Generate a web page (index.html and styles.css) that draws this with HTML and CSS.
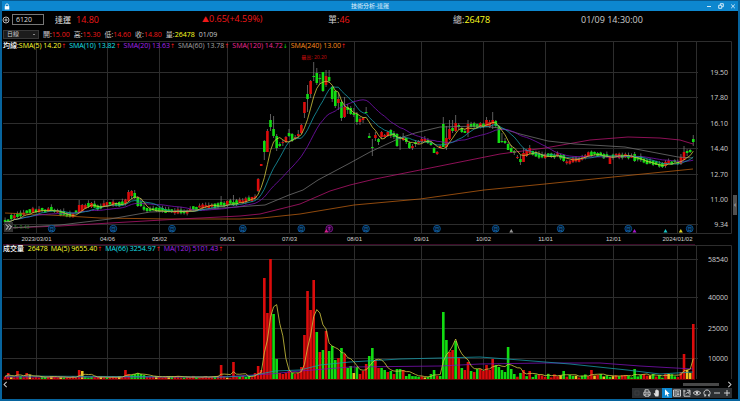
FILE: index.html
```html
<!DOCTYPE html>
<html lang="zh-TW">
  <head>
    <meta charset="UTF-8" />
    <meta name="viewport" content="width=device-width, initial-scale=1.0" />
    <title>技術分析-達運</title>
    <link rel="stylesheet" href="styles.css">
  </head>
  <body>
    <div class="window">
      <header class="titlebar">
        <svg class="titlebar__lock" viewBox="0 0 8 8" aria-hidden="true">
          <path d="M2 4V2.5a2 2 0 0 1 4 0V4" fill="none" stroke="#fff" />
          <rect x="1" y="3.5" width="6" height="4.5" fill="#fff" />
        </svg>
        <h1 class="titlebar__title">技術分析-達運</h1>
        <div class="titlebar__controls">
          <button class="titlebar__btn" aria-label="最小化">
            <svg viewBox="0 0 6 6"><path d="M1 3.5h4" /></svg>
          </button>
          <button class="titlebar__btn" aria-label="還原">
            <svg viewBox="0 0 6 6"><path d="M.7 2.3h3v3h-3zM2.3 2V.7h3v3H4" /></svg>
          </button>
          <button class="titlebar__btn" aria-label="關閉">
            <svg viewBox="0 0 6 6"><path d="M1.2 1.5l3.6 3.6M4.8 1.5L1.2 5.1" /></svg>
          </button>
        </div>
      </header>

      <!-- Quote -->
      <section class="quote">
        <div class="quote__stock">
          <button class="quote__add" aria-label="加入">
            <svg viewBox="0 0 8 8"><circle cx="4" cy="4" r="3" /><path d="M4 2.4v3.2M2.4 4h3.2" /></svg>
          </button>
          <input class="quote__code" type="text" value="6120" aria-label="股票代號" />
          <span class="quote__name">達運</span>
          <span class="quote__price up">14.80</span>
        </div>
        <span class="up"><span class="quote__mark">▲</span>0.65(+4.59%)</span>
        <span>單:<span class="up">46</span></span>
        <span>總:<span class="volume">26478</span></span>
        <time>01/09 14:30:00</time>
      </section>

      <!-- Period + OHLC -->
      <section class="ohlc">
        <select class="ohlc__period" aria-label="週期">
          <option>日線</option>
        </select>
        <span>開:<span class="up">15.00</span></span>
        <span>高:<span class="up">15.30</span></span>
        <span>低:<span class="up">14.60</span></span>
        <span>收:<span class="up">14.80</span></span>
        <span>量:<span class="volume">26478</span></span>
        <time>01/09</time>
      </section>

      <main class="charts">
        <section class="panel">
          <svg class="panel__plot" id="price" viewBox="2 41 736 203" role="img" aria-label="日線"></svg>
          <div class="legend">
            <span class="legend__item legend__item--sma5"><b>均線:</b>SMA(5) 14.20<i class="up">↑</i></span>
            <span class="legend__item legend__item--sma10">SMA(10) 13.82<i class="up">↑</i></span>
            <span class="legend__item legend__item--sma20">SMA(20) 13.63<i class="up">↑</i></span>
            <span class="legend__item legend__item--sma60">SMA(60) 13.78<i class="up">↑</i></span>
            <span class="legend__item legend__item--sma120">SMA(120) 14.72<i class="down">↓</i></span>
            <span class="legend__item legend__item--sma240">SMA(240) 13.00<i class="up">↑</i></span>
          </div>
          <button class="panel__expand" aria-label="展開">
            <svg viewBox="0 0 9 9"><path d="M1.8 1.8l2.7 2.7-2.7 2.7M4.8 1.8l2.7 2.7-2.7 2.7" /></svg>
          </button>
          <button class="panel__handle" aria-label="側欄">‹</button>
        </section>

        <section class="panel">
          <svg class="panel__plot" id="volume" viewBox="2 244 736 136" role="img" aria-label="成交量"></svg>
          <div class="legend">
            <span class="legend__item legend__item--sma5"><b>成交量</b> &nbsp;26478</span>
            <span class="legend__item legend__item--sma5">MA(5) 9655.40<i class="up">↑</i></span>
            <span class="legend__item legend__item--sma10">MA(66) 3254.97<i class="up">↑</i></span>
            <span class="legend__item legend__item--sma20">MA(120) 5101.43<i class="up">↑</i></span>
          </div>
        </section>
      </main>

      <div class="scroll">
        <button class="scroll__arrow" aria-label="向左"><svg viewBox="0 0 6 6"><path d="M4 .8L1.8 3 4 5.2" /></svg></button>
        <input class="scroll__range" type="range" min="0" max="100" value="100" aria-label="捲動" />
        <button class="scroll__arrow" aria-label="向右"><svg viewBox="0 0 6 6"><path d="M2 .8L4.2 3 2 5.2" /></svg></button>
      </div>

      <footer class="tools">
        <button class="tools__btn tools__btn--off" aria-label="儲存"><svg viewBox="0 0 10 10"><path d="M3 3h4v4H3z" /></svg></button>
        <button class="tools__btn" aria-label="列印"><svg viewBox="0 0 10 10"><path d="M3 4V1.8h3.2L7 2.6V4M2.8 7.3H1.9V4.2h6.2v3.1H7.2M3 6h4v2.2H3z" /></svg></button>
        <button class="tools__btn" aria-label="拖曳"><svg viewBox="0 0 10 10"><path class="fill" d="M3.4 8.5L1.8 5.8c-.3-.7.5-1 .9-.5l.5.6V2.6c0-.6.8-.6.9 0V1.9c0-.6.9-.6.9 0v.3c0-.6.9-.6.9 0v.6c0-.5.9-.5.9 0v3.6L6.4 8.5z" /></svg></button>
        <button class="tools__btn tools__btn--active" aria-label="選取"><svg viewBox="0 0 10 10"><path class="fill" d="M3 1.2v6.6l1.6-1.5 1.1 2.4 1-.5-1-2.3h2z" /></svg></button>
        <button class="tools__btn" aria-label="資訊"><svg viewBox="0 0 10 10"><path d="M1.5 2h7v6.2h-7zM4 2v6.2M2.2 4h1M2.2 6h1M5 3.8h2.4M5 5.2h2.4M5 6.6h2.4" /></svg></button>
        <button class="tools__btn" aria-label="指標"><svg viewBox="0 0 10 10"><path d="M2 1.8v6.4h6.3M1.5 3h2.2M3.4 6.4l1.8-2 1.2 1 1-2.6M5 2.2h3v5" /></svg></button>
        <button class="tools__btn" aria-label="顯示"><svg viewBox="0 0 10 10"><path d="M1.2 5Q5 1 8.8 5 5 9 1.2 5z" /><circle class="fill" cx="5" cy="4.8" r="1.3" /></svg></button>
        <button class="tools__btn" aria-label="重新整理"><svg viewBox="0 0 10 10"><path d="M3.4 7.7A3.1 3.1 0 1 1 6.6 7.7M2 7.9h1.7V6.3M8 7.9H6.5V6.3" /></svg></button>
        <button class="tools__btn" aria-label="縮小"><svg viewBox="0 0 10 10"><path d="M2 5h6" /></svg></button>
        <button class="tools__btn" aria-label="放大"><svg viewBox="0 0 10 10"><path d="M2 5h6M5 2v6" /></svg></button>
      </footer>
    </div>
    <script src="chart.js"></script>
  </body>
</html>
```
FILE: styles.css
```css
* {
  box-sizing: border-box;
}

body {
  margin: 0;
  background-color: #000;
  color: #ccc;
  font-family: "Open Sans", "Noto Sans", "Noto Sans CJK TC", sans-serif;
  font-size: 7px;
}

button,
input,
select {
  margin: 0;
  padding: 0;
  border: none;
  background: none;
  color: inherit;
  font: inherit;
}

button svg {
  display: block;
  width: 100%;
  height: 100%;
  fill: none;
  stroke: currentColor;
  stroke-width: 0.9;
}

.window {
  display: flex;
  flex-direction: column;
  min-height: 100vh;
  border: 2px solid #07649d;
  border-top: none;
}

.up {
  color: #f01818;
}

.down {
  color: #16d816;
}

.volume {
  color: #ffff20;
}

/* Title bar */
.titlebar {
  display: grid;
  grid-template-columns: 1fr auto 1fr;
  align-items: center;
  height: 11px;
  padding: 0 2px;
  border-top: 1px solid #07598f;
  background-color: #0d87cf;
  color: #e4f3fc;
}

.titlebar__lock {
  width: 6px;
  height: 7px;
}

.titlebar__title {
  margin: 0;
  font-size: 6px;
  font-weight: normal;
  line-height: 10px;
}

.titlebar__controls {
  display: flex;
  justify-content: flex-end;
  gap: 6px;
}

.titlebar__btn {
  width: 6px;
  height: 6px;
}

/* Quote row */
.quote {
  display: grid;
  grid-template-columns: 200fr 126fr 125fr 128fr 157fr;
  align-items: center;
  height: 17px;
  font-size: 9px;
  line-height: 12px;
  white-space: nowrap;
}

.quote__stock {
  display: flex;
  align-items: center;
}

.quote__add {
  width: 8px;
  height: 8px;
  margin-right: 2px;
}

.quote__code {
  width: 32px;
  height: 11px;
  padding: 0 3px;
  border: 1px solid #777;
  color: #ddd;
  font-size: 7px;
}

.quote__name {
  margin: 0 5px 0 11px;
  font-size: 8px;
  font-weight: 500;
}

.quote__mark {
  font-size: 7px;
}

/* OHLC row */
.ohlc {
  display: flex;
  align-items: center;
  gap: 4px;
  height: 13px;
  line-height: 9px;
}

.ohlc__period {
  appearance: none;
  width: 36px;
  height: 9px;
  margin-left: 1px;
  padding: 0 3px;
  border: 1px solid #383838;
  background: linear-gradient(#888, #888) right 3px center / 2px 1px no-repeat #1c1c1c;
  color: #ccc;
  font-size: 6px;
  line-height: 7px;
}

/* Chart panels */
.panel {
  position: relative;
}

.panel__plot {
  display: block;
  width: 100%;
  height: auto;
}

.panel__expand {
  position: absolute;
  bottom: 12px;
  left: 2px;
  width: 9px;
  height: 10px;
  background-color: #333;
  color: #fff;
}

.panel__handle {
  position: absolute;
  top: 154px;
  right: 1px;
  width: 4px;
  height: 20px;
  background-color: #505050;
  color: #ddd;
  line-height: 18px;
}

.legend {
  position: absolute;
  top: 0;
  left: 1px;
  display: flex;
  gap: 3px;
  line-height: 9px;
  white-space: nowrap;
}

.legend__item b {
  color: #fff;
  font-weight: 500;
}

.legend__item i {
  display: inline-block;
  width: 5px;
  font-family: "DejaVu Sans", sans-serif;
  font-size: 6px;
  font-style: normal;
  text-align: center;
}

.legend__item--sma5 {
  color: #ffff30;
}

.legend__item--sma10 {
  color: #18e0ec;
}

.legend__item--sma20 {
  color: #a424ec;
}

.legend__item--sma60 {
  color: #a4a4a4;
}

.legend__item--sma120 {
  color: #ec2894;
}

.legend__item--sma240 {
  color: #fc8c1c;
}

/* Svg parts */
.grid {
  stroke: #2d2d2d;
  fill: none;
}

.split {
  stroke: #3c0a28;
}

.line {
  fill: none;
  stroke-width: 0.8;
}

.line--sma5 {
  stroke: #d2c840;
}

.line--sma10 {
  stroke: #1899a8;
}

.line--sma20 {
  stroke: #7a12b4;
}

.line--sma60 {
  stroke: #707070;
}

.line--sma120 {
  stroke: #b0146c;
}

.line--sma240 {
  stroke: #b45c10;
}

.wick {
  stroke: #858585;
  stroke-width: 0.7;
}

.bar--r {
  fill: #dc0c0c;
}

.bar--g {
  fill: #12dc12;
}

.bar--y {
  fill: #f0c020;
}

.label {
  fill: #d0d0d0;
  font-size: 7px;
}

.label--date {
  font-family: "Liberation Sans", sans-serif;
  font-size: 6px;
}

.label--high {
  fill: #c80c0c;
  font-size: 5px;
}

.label--low {
  fill: #3c8c3c;
  font-size: 5px;
}

.month {
  fill: #04182c;
  stroke: #0b5ea4;
  stroke-width: 0.8;
}

.month__text {
  fill: #1672bc;
  font-size: 5px;
}

.month--quarter {
  fill: #200428;
  stroke: #8c149c;
}

/* Scroll bar */
.scroll {
  display: flex;
  align-items: center;
  height: 8px;
  padding-right: 5px;
}

.scroll__arrow {
  width: 7px;
  height: 7px;
}

.scroll__range {
  appearance: none;
  flex: 1;
  min-width: 0;
  height: 4px;
  margin: 0 7px 0 0;
}

.scroll__range::-webkit-slider-thumb {
  appearance: none;
  width: 36px;
  height: 3px;
  background-color: #484848;
}

/* Tools */
.tools {
  display: flex;
  justify-content: flex-end;
  height: 11px;
  padding: 0 6px 1px 0;
}

.tools__btn {
  width: 10px;
  height: 10px;
  background-color: #2c2f32;
  color: #ddd;
}

.tools__btn .fill {
  fill: currentColor;
  stroke: none;
}

.tools__btn--off {
  color: #3c3f42;
}

.tools__btn--active {
  background-color: #0d87cf;
  color: #fff;
}
```
FILE: chart.js
```js
const NS = "http://www.w3.org/2000/svg";
const COUNT = 224;
const FIRST_X = 5.1;
const STEP = 3.086;
const BASE = 379;

const price = document.getElementById("price");
const volume = document.getElementById("volume");

const months = [
  [36.5, "2023/03/01"], [107.5, "04/06"], [159.5, "05/02"], [227.5, "06/01"], [289.5, "07/03"], [354.5, "08/01"],
  [421.5, "09/01"], [483.5, "10/02"], [545.5, "11/01"], [613.5, "12/01"], [677.5, "2024/01/02"],
];
const priceLabels = [[72.5, "19.50"], [97.5, "17.80"], [123.5, "16.10"], [148.5, "14.40"], [174.5, "12.70"], [199.5, "11.00"], [224.5, "9.34"]];
const volumeLabels = [[259.5, "58540"], [297.5, "40000"], [328.5, "25000"], [358.5, "10000"]];

function add(parent, tag, attrs, text) {
  const el = document.createElementNS(NS, tag);
  for (const key in attrs) el.setAttribute(key, attrs[key]);
  if (text) el.textContent = text;
  parent.appendChild(el);
  return el;
}

const xOf = (i) => FIRST_X + STEP * i;
const indexOf = (x) => Math.round((x - FIRST_X) / STEP);
const noise = (i) => {
  const v = Math.sin(i * 12.9898) * 43758.5453;
  return v - Math.floor(v);
};

function valueAt(points, x) {
  if (x <= points[0][0]) return points[0][1];
  for (let k = 1; k < points.length; k++) {
    const [x1, y1] = points[k];
    const [x0, y0] = points[k - 1];
    if (x <= x1) return y0 + ((y1 - y0) * (x - x0)) / (x1 - x0);
  }
  return points[points.length - 1][1];
}

// Middle of the candles where the price moves little
const trend = [
  [5, 222], [11, 218], [22, 214], [34, 210], [45, 210], [53, 209], [60, 213], [73, 215], [79, 209], [91, 205], [100, 207],
  [108, 204], [124, 203], [131, 194], [137, 202], [147, 210], [160, 210], [175, 211], [187, 213], [195, 208], [215, 206],
  [230, 203], [246, 201], [256, 197], [258, 186], [468, 127], [486, 124], [498, 135], [532, 152], [541, 156], [560, 155],
  [566, 162], [574, 161], [585, 157], [592, 153], [600, 155], [620, 156], [632, 157], [642, 159], [652, 163], [662, 165],
  [670, 162], [679, 162], [686, 152], [690, 151],
];

// x, body top, body bottom, high, low, colour
const candles = [
  [79, 205, 213, 200, 213, "r"], [82, 205, 211, 204, 212, "r"], [91, 203, 207, 202, 208, "r"], [128, 192, 201, 190, 202, "r"],
  [131, 191, 196, 190, 199, "r"], [134, 193, 198, 190, 199, "g"], [137.5, 198, 206, 196, 207, "g"], [140.5, 202, 206, 198, 207, "g"],
  [222, 202, 205, 196, 206, "g"], [234, 202, 205, 195, 206, "g"],
  [258.1, 179, 191, 178, 192, "r"], [261.2, 164, 166, 164, 166, "r"], [264.3, 141, 152, 140, 160, "g"],
  [267.3, 131, 152, 129, 152, "r"], [270.3, 120, 127, 114, 131, "g"], [273.6, 129, 136, 116, 138, "g"],
  [276.7, 136, 148, 134, 151, "g"], [280, 144, 146, 142, 147, "g"], [283, 142, 143, 140, 146, "r"], [286, 137, 142, 136, 143, "r"],
  [289, 133, 136, 129, 137, "g"], [292.3, 134, 141, 133, 142, "g"], [295.4, 137, 139, 135, 140, "r"], [298.4, 134, 136, 130, 138, "r"],
  [301.4, 125, 133, 124, 134, "r"], [304.4, 102, 113, 102, 118, "r"], [307.6, 94, 99, 85, 112, "g"], [310.7, 81, 94, 80, 98, "r"],
  [313.7, 76, 77, 62, 81, "g"], [316.7, 73, 83, 68, 85, "g"], [320, 78, 79, 74, 84, "g"], [323, 72, 91, 72, 92, "g"],
  [326, 76, 85, 70, 87, "r"], [329, 77, 81, 70, 83, "g"], [332.3, 87, 99, 86, 102, "g"], [335.4, 91, 106, 90, 108, "g"],
  [338.4, 99, 103, 93, 110, "r"], [341.4, 102, 118, 100, 121, "g"], [344.6, 107, 117, 97, 118, "r"], [347.7, 107, 110, 104, 114, "g"],
  [350.7, 108, 114, 106, 115, "g"], [353.7, 113, 115, 108, 117, "g"], [357, 114, 122, 112, 125, "g"], [360, 119, 122, 117, 125, "r"],
  [363, 118, 120, 117, 123, "r"], [366.3, 112, 113, 107, 113, "g"], [369.4, 136, 138, 133, 138, "g"], [372.6, 147, 148, 139, 156, "g"],
  [375.4, 135, 138, 132, 141, "r"], [378.4, 139, 142, 138, 145, "g"], [381.7, 132, 137, 131, 139, "r"], [384.7, 135, 137, 134, 138, "r"],
  [387.7, 132, 136, 131, 137, "r"], [390.7, 130, 135, 129, 138, "g"], [393.9, 133, 137, 131, 139, "g"], [397, 134, 146, 133, 147, "g"],
  [400, 137, 139, 136, 150, "g"], [403, 137, 140, 133, 141, "r"], [406, 138, 142, 138, 144, "g"], [409.3, 143, 148, 141, 149, "g"],
  [412.4, 146, 148, 144, 150, "r"], [415.3, 142, 144, 140, 147, "g"], [418.6, 141, 143, 140, 144, "r"], [421.6, 139, 142, 137, 143, "r"],
  [424.7, 139, 141, 136, 142, "r"], [427.6, 140, 143, 138, 144, "g"], [431, 143, 145, 141, 146, "g"], [434, 148, 153, 147, 153, "g"],
  [437, 152, 154, 151, 155, "r"], [440.1, 146, 148, 145, 148, "r"], [443.3, 124, 147, 117, 147, "g"], [446.3, 138, 147, 126, 150, "r"],
  [449.3, 129, 139, 120, 140, "r"], [452.3, 128, 131, 120, 133, "g"], [455.6, 123, 131, 115, 132, "r"], [458.6, 125, 127, 123, 130, "g"],
  [461.7, 128, 132, 127, 133, "g"], [464.7, 131, 133, 129, 133, "g"], [468, 124, 133, 120, 137, "r"], [486.3, 120, 126, 117, 127, "r"],
  [489.3, 122, 127, 120, 128, "r"], [492.3, 120, 124, 112, 129, "r"], [495.3, 121, 126, 120, 128, "g"], [498.6, 126, 143, 125, 143, "g"],
  [501.7, 141, 142, 133, 143, "g"], [504.7, 141, 143, 138, 144, "g"], [508, 144, 150, 142, 150, "g"], [511, 148, 152, 145, 153, "g"],
  [514, 151, 153, 150, 155, "g"], [517, 157, 158, 155, 159, "r"], [520.3, 159, 162, 155, 165, "g"], [523.3, 153, 162, 148, 162, "r"],
  [526.3, 150, 156, 149, 157, "r"], [529.3, 148, 153, 145, 154, "r"], [563.5, 155, 161, 154, 162, "g"], [610, 157, 164, 156, 164, "r"],
  [634, 154, 161, 152, 162, "g"], [662.3, 163, 167, 162, 168, "g"], [680.7, 157, 164, 154, 165, "r"], [683.7, 152, 160, 146, 160, "r"],
  [686.8, 151, 153, 149, 156, "g"], [690, 150, 152, 149, 153, "g"], [693.2, 139, 142, 135, 146, "g"],
];

// x, height, colour
const volumes = [
  [8.3, 6, "r"], [17.7, 8, "r"], [27, 6, "r"], [30, 4, "y"], [79, 9, "r"], [82.5, 8, "y"], [125.7, 9, "r"], [128.7, 5, "r"],
  [131.7, 4, "g"], [134.8, 5, "g"], [138, 6, "g"], [141, 5, "g"], [144, 4, "g"], [221.3, 14, "r"], [233.7, 17, "r"], [255, 6, "r"],
  [258, 13, "r"], [261.2, 9, "r"], [264.3, 101, "r"], [267.3, 66, "r"], [270.5, 120, "r"], [273.6, 65, "g"], [276.7, 20, "g"],
  [280, 6, "r"], [283, 5, "r"], [286, 6, "r"], [289, 8, "r"], [292.3, 6, "g"], [295.4, 5, "r"], [298.4, 6, "r"], [301.4, 12, "r"],
  [304.4, 44, "r"], [307.6, 88, "r"], [310.7, 69, "r"], [313.7, 99, "r"], [316.7, 47, "g"], [320, 27, "r"], [323, 29, "g"],
  [326, 48, "r"], [329, 28, "g"], [332.3, 33, "g"], [335.4, 19, "g"], [338.4, 21, "r"], [341.4, 31, "g"], [344.6, 25, "r"],
  [347.7, 11, "g"], [350.7, 13, "g"], [353.7, 6, "y"], [357, 12, "g"], [360, 5, "r"], [363, 8, "r"], [366.3, 15, "r"],
  [369.4, 23, "g"], [372.6, 31, "g"], [375.4, 19, "r"], [378.4, 11, "r"], [381.7, 11, "g"], [384.7, 9, "g"], [387.7, 7, "r"],
  [390.7, 8, "g"], [393.9, 5, "r"], [397, 10, "g"], [400, 10, "g"], [403, 9, "r"], [406, 3, "g"], [409.3, 5, "g"],
  [430, 5, "g"], [433, 9, "g"], [443.3, 67, "g"], [446.3, 39, "g"], [449.3, 27, "r"], [452.3, 29, "r"], [455.6, 38, "g"],
  [458.6, 21, "r"], [461.7, 11, "g"], [464.7, 9, "r"], [468, 17, "r"], [471, 8, "g"], [474, 7, "r"], [477, 10, "g"], [480, 10, "r"],
  [483.3, 8, "r"], [486.3, 14, "r"], [489.3, 9, "r"], [492.3, 20, "r"], [495.3, 14, "g"], [498.6, 12, "g"], [501.7, 9, "g"],
  [504.7, 7, "g"], [508, 32, "g"], [511, 10, "g"], [514, 5, "g"], [520.3, 6, "g"], [523.3, 9, "r"], [529.3, 8, "r"], [563.5, 8, "g"],
  [591, 9, "r"], [600, 5, "g"], [634, 10, "g"], [652, 5, "g"], [680.7, 7, "r"], [683.7, 25, "r"], [686.8, 9, "y"], [690, 6, "y"],
  [693.2, 55, "r"],
];

const sma60 = [[8, 228], [60, 225], [110, 219], [150, 212], [180, 211], [250, 206], [265, 205], [289, 195], [303, 190], [318, 180],
  [350, 163], [370, 152], [400, 138], [415, 133], [440, 127], [480, 126], [500, 128], [520, 134], [548, 141], [575, 144], [625, 147],
  [678, 157], [693, 158]];
const sma120 = [[8, 228], [60, 226], [110, 223], [180, 219], [240, 216], [260, 214], [300, 204], [330, 191], [350, 185], [375, 179],
  [400, 174], [450, 164], [500, 154], [545, 148], [590, 140], [628, 137], [660, 138], [680, 140], [693, 144]];
const sma240 = [[5, 213], [50, 215], [100, 218], [170, 219], [240, 219], [262, 218], [300, 214], [354, 205], [420, 199], [484, 190],
  [545, 184], [613, 177], [693, 169]];
const ma66 = [[5, 376], [220, 377], [250, 376], [275, 371], [300, 370], [320, 365], [350, 362], [400, 359], [440, 358], [480, 357],
  [520, 360], [570, 364], [627, 370], [660, 374], [693, 372]];
const ma120 = [[5, 377], [220, 377], [270, 374], [300, 371], [350, 367], [440, 366], [480, 364], [545, 363], [600, 363], [640, 366], [693, 369]];

function drawGrid(svg, top, bottom, rows, labels) {
  months.forEach(([x]) => add(svg, "path", { class: "grid", d: `M${x} ${top}V${bottom}` }));
  rows.forEach((y) => add(svg, "path", { class: "grid", d: `M3 ${y}H698` }));
  add(svg, "path", { class: "grid", d: `M3 ${top}H731.5V${bottom}M696.5 ${top}V${bottom}` });
  labels.forEach(([y, text]) => add(svg, "text", { class: "label", x: 728, y: y + 2.5, "text-anchor": "end" }, text));
}

function drawLine(svg, name, points) {
  add(svg, "polyline", { class: `line line--${name}`, points: points.map((p) => p.join()).join(" ") });
}

// Simple moving average over the last n days
function average(values, n, toY) {
  return values.map((_, i) => {
    const part = values.slice(Math.max(0, i - n + 1), i + 1);
    return [xOf(i), toY(part.reduce((a, b) => a + b, 0) / part.length)];
  });
}

// Price panel
drawGrid(price, 41.5, 233.5, priceLabels.map((l) => l[0]), priceLabels);
add(price, "path", { class: "grid", d: "M3 233.5H731.5" });
months.forEach(([x, text]) => add(price, "text", { class: "label label--date", x, y: 241, "text-anchor": "middle" }, text));

const days = [];
for (let i = 0; i < COUNT; i++) {
  const mid = valueAt(trend, xOf(i)) + noise(i) * 2 - 1;
  const half = 0.8 + noise(i + 300) * 1.4;
  const rising = valueAt(trend, xOf(i + 1)) < valueAt(trend, xOf(i - 1)) - 0.5;
  const color = noise(i + 700) < (rising ? 0.5 : 0.25) ? "r" : "g";
  days.push([mid - half, mid + half, mid - half - noise(i + 90) * 3, mid + half + noise(i + 50) * 2, color]);
}
candles.forEach(([x, ...day]) => { days[indexOf(x)] = day; });

days.forEach(([top, bottom, high, low, color], i) => {
  const x = xOf(i);
  add(price, "path", { class: "wick", d: `M${x} ${high}V${low}` });
  add(price, "rect", { class: `bar--${color}`, x: x - 1.3, y: top, width: 2.6, height: Math.max(1, bottom - top) });
});

const closes = days.map((d) => (d[4] === "r" ? d[0] : d[1]));
drawLine(price, "sma240", sma240);
drawLine(price, "sma120", sma120);
drawLine(price, "sma60", sma60);
drawLine(price, "sma20", average(closes, 20, (v) => v));
drawLine(price, "sma10", average(closes, 10, (v) => v));
drawLine(price, "sma5", average(closes, 5, (v) => v));

add(price, "text", { class: "label--high", x: 314, y: 59, "text-anchor": "middle" }, "最高: 20.20");
add(price, "text", { class: "label--low", x: 14, y: 229 }, "5: 9.43");

[51.7, 113.3, 172, 242.8, 301.3, 366, 437, 495.7, 560.7, 628.3, 689.7].forEach((x) => {
  add(price, "circle", { class: "month", cx: x, cy: 228.7, r: 3.4 });
  add(price, "text", { class: "month__text", x, y: 230.5, "text-anchor": "middle" }, "月");
});
add(price, "circle", { class: "month month--quarter", cx: 329.3, cy: 228.7, r: 3.4 });
add(price, "path", { d: "M327.8 227.5h3M328 229h2.6M329.3 226.5v4.4", stroke: "#b020c0", "stroke-width": 0.6 });
[[326.3, "#d8208c"], [511.3, "#999"], [634.5, "#a818d0"], [665.5, "#18c8c8"], [680.8, "#e0d828"]].forEach(([x, fill]) => {
  add(price, "path", { d: `M${x} 229l2 3.4h-4z`, fill });
});

// Volume panel
add(volume, "path", { class: "split", d: "M3 244.5H695" });
drawGrid(volume, 245.5, BASE, volumeLabels.map((l) => l[0]), volumeLabels);

const bars = [];
for (let i = 0; i < COUNT; i++) {
  const n = noise(i + 1200);
  bars.push([1.2 + noise(i + 40) * (xOf(i) > 440 ? 4 : 2), n < 0.55 ? "r" : n < 0.88 ? "g" : "y"]);
}
volumes.forEach(([x, ...bar]) => { bars[indexOf(x)] = bar; });
bars.forEach(([height, color], i) => {
  add(volume, "rect", { class: `bar--${color}`, x: xOf(i) - 1.3, y: BASE - height, width: 2.6, height });
});
add(volume, "path", { d: "M3 379.5H695", stroke: "#6c0808" });
drawLine(volume, "sma20", ma120);
drawLine(volume, "sma10", ma66);
drawLine(volume, "sma5", average(bars.map((b) => b[0]), 5, (v) => BASE - v));
```
